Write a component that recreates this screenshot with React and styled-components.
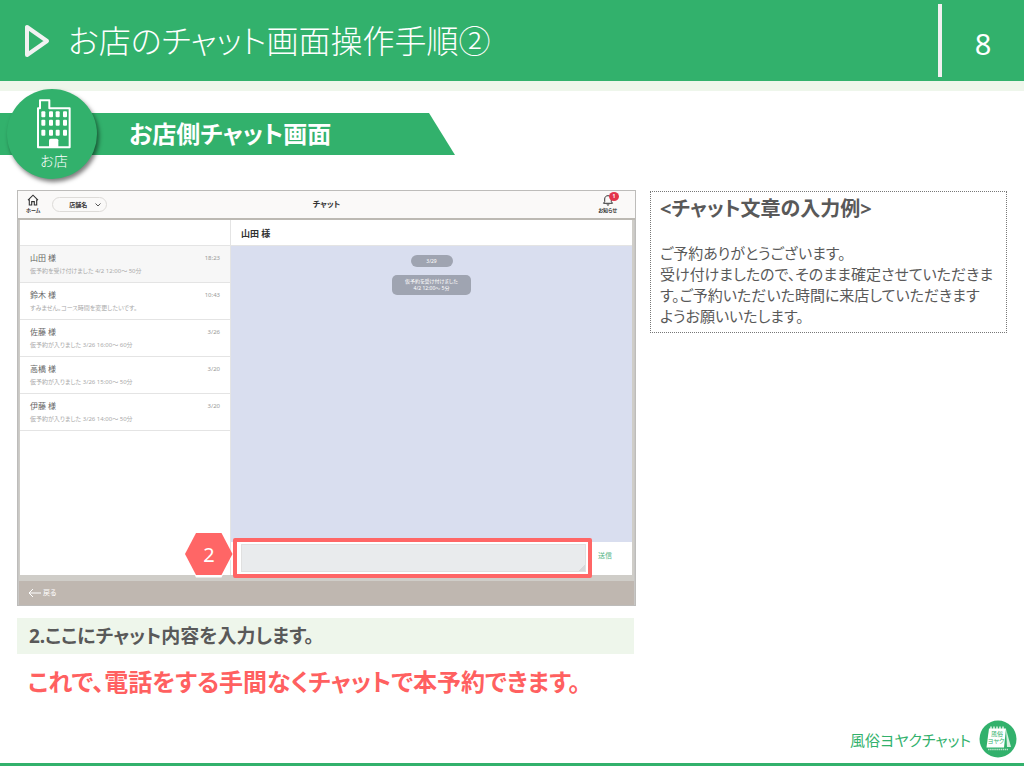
import { useState } from "react";
import styled, { createGlobalStyle } from "styled-components";

const rooms = [
    { id: 1, name: "山田 様", text: "仮予約を受け付けました 4/2 12:00～ 50分", time: "18:23" },
    { id: 2, name: "鈴木 様", text: "すみません。コース時間を変更したいです。", time: "10:43" },
    { id: 3, name: "佐藤 様", text: "仮予約が入りました 3/26 16:00～ 60分", time: "3/26" },
    { id: 4, name: "高橋 様", text: "仮予約が入りました 3/26 15:00～ 50分", time: "3/20" },
    { id: 5, name: "伊藤 様", text: "仮予約が入りました 3/26 14:00～ 50分", time: "3/20" },
];

const windowCols = [124, 147, 167, 189];
const windowRows = [333, 358, 388];

const BuildingIcon = () => (
    <svg width="36" height="50" viewBox="108 296 108 150" fill="none">
        <path d="M114 441V324H120V300H148V324H209V441Z" stroke="#fff" strokeWidth="6" strokeLinejoin="round" />
        {windowRows.map((y) =>
            windowCols.map((x) => <rect key={`${x}-${y}`} x={x} y={y} width="12" height="18" rx="3" fill="#fff" />)
        )}
        <path d="M147 442V420Q147 415 152 415H170Q175 415 175 420V442Z" fill="#fff" />
    </svg>
);

const HomeIcon = () => (
    <svg width="12" height="12" viewBox="0 0 12 12" fill="none" stroke="#333" strokeWidth="1.1">
        <path d="M1 6.2L6 1.2L11 6.2M2.3 5.4V11H4.7V7.6H7.3V11H9.7V5.4" />
    </svg>
);

const BellIcon = () => (
    <svg width="12" height="12" viewBox="0 0 12 12" fill="none" stroke="#333" strokeWidth="1">
        <path d="M1.5 9.3H10.5L9.3 7.6V5C9.3 3 8 1.7 6 1.7S2.7 3 2.7 5V7.6Z" strokeLinejoin="round" />
        <path d="M4.8 10.6Q6 11.8 7.2 10.6" />
    </svg>
);

const LogoIcon = () => (
    <svg width="38" height="38" viewBox="0 0 38 38">
        <circle cx="19" cy="19" r="18.5" fill="#32b16c" />
        <path d="M27 9L32 27H28Z" fill="#d5efdf" />
        <path d="M10 8.5H27L25 27.5H7.5Z" fill="#fff" />
        <path d="M12 6.5V9.5M15 6.5V9.5M18 6.5V9.5M21 6.5V9.5M24 6.5V9.5" stroke="#fff" strokeWidth="1.3" />
        <g fill="#32b16c" fontSize="6" textAnchor="middle">
            <text x="18" y="16">風俗</text>
            <text x="17" y="23">ヨヤク</text>
        </g>
        <path d="M9 29.5H29" stroke="#b5e0c7" strokeWidth="1.3" strokeDasharray="1.5 0.6" />
    </svg>
);

const App = () => {
    const [selected, setSelected] = useState(1);
    const [message, setMessage] = useState("");

    return (
        <>
            <GlobalStyle />
            <Page>
                <Header>
                    <svg width="28" height="36" viewBox="0 0 28 36" fill="none">
                        <path d="M5 4V32L25 18Z" stroke="#f2f2f2" strokeWidth="4" strokeLinejoin="round" />
                    </svg>
                    <PageTitle>お店のチャット画面操作手順②</PageTitle>
                    <PageNumber>8</PageNumber>
                </Header>

                <Banner>
                    <Ribbon>お店側チャット画面</Ribbon>
                    <ShopMark>
                        <BuildingIcon />
                        お店
                    </ShopMark>
                </Banner>

                <Content>
                    <div>
                        <Screen>
                            <ScreenHead>
                                <HeadLeft>
                                    <IconLink href="#home">
                                        <HomeIcon />
                                        ホーム
                                    </IconLink>
                                    <SelectBox>
                                        <ShopSelect aria-label="店舗名">
                                            <option>店舗名</option>
                                        </ShopSelect>
                                        <svg width="6" height="4" viewBox="0 0 6 4" fill="none" stroke="#555">
                                            <path d="M0.5 0.5L3 3L5.5 0.5" />
                                        </svg>
                                    </SelectBox>
                                </HeadLeft>
                                <ScreenTitle>チャット</ScreenTitle>
                                <HeadRight>
                                    <IconLink href="#news">
                                        <BellIcon />
                                        お知らせ
                                        <Badge>1</Badge>
                                    </IconLink>
                                </HeadRight>
                            </ScreenHead>

                            <ScreenBody>
                                <RoomList>
                                    <PanelHead />
                                    {rooms.map((room) => (
                                        <Room key={room.id} $active={room.id === selected} onClick={() => setSelected(room.id)}>
                                            <RoomTop>
                                                {room.name}
                                                <RoomTime>{room.time}</RoomTime>
                                            </RoomTop>
                                            <RoomText>{room.text}</RoomText>
                                        </Room>
                                    ))}
                                </RoomList>
                                <Chat>
                                    <PanelHead>山田 様</PanelHead>
                                    <Messages>
                                        <DateChip>3/29</DateChip>
                                        <Notice>
                                            仮予約を受け付けました
                                            <br />
                                            4/2 12:00～ 5分
                                        </Notice>
                                    </Messages>
                                    <Composer>
                                        <MessageInput
                                            aria-label="メッセージ"
                                            value={message}
                                            onChange={(e) => setMessage(e.target.value)}
                                        />
                                        <SendButton>送信</SendButton>
                                        <Highlight />
                                        <StepMark>
                                            <svg width="50" height="46" viewBox="0 0 50 46">
                                                <path d="M12 2.5H37.5L48.5 24L37.5 45.5H12L1 24Z" fill="#fff" />
                                                <path d="M12 1H37.5L48.5 22L37.5 43H12L1 22Z" fill="#ff6666" />
                                            </svg>
                                            <StepNumber>2</StepNumber>
                                        </StepMark>
                                    </Composer>
                                </Chat>
                            </ScreenBody>

                            <ScreenFoot>
                                <BackButton>
                                    <svg width="13" height="10" viewBox="0 0 13 10" fill="none" stroke="#fff">
                                        <path d="M5 1L1 5L5 9M1 5H13" />
                                    </svg>
                                    戻る
                                </BackButton>
                            </ScreenFoot>
                        </Screen>
                        <Caption>2.ここにチャット内容を入力します。</Caption>
                        <Result>これで、電話をする手間なくチャットで本予約できます。</Result>
                    </div>

                    <Example>
                        <ExampleTitle>&lt;チャット文章の入力例&gt;</ExampleTitle>
                        <ExampleText>
                            ご予約ありがとうございます。
                            <br />
                            受け付けましたので、そのまま確定させていただきま
                            <br />
                            す。ご予約いただいた時間に来店していただきます
                            <br />
                            ようお願いいたします。
                        </ExampleText>
                    </Example>
                </Content>

                <Footer>
                    風俗ヨヤクチャット
                    <LogoIcon />
                </Footer>
            </Page>
        </>
    );
};

const GlobalStyle = createGlobalStyle`
* {
  box-sizing: border-box;
}
body {
  margin: 0;
  background: #fff;
  color: #595959;
  font-family: "Noto Sans", "Noto Sans CJK JP", sans-serif;
  font-feature-settings: "palt";
}
button, select, textarea {
  margin: 0;
  padding: 0;
  border: 0;
  background: none;
  color: inherit;
  font: inherit;
  font-feature-settings: inherit;
}
h1, h2, h3, p {
  margin: 0;
}
svg {
  display: block;
  flex-shrink: 0;
}
`;

const Page = styled.div`
display: flex;
flex-direction: column;
min-height: 100vh;
`;

const Header = styled.header`
display: flex;
align-items: center;
height: 91px;
padding-left: 22px;
border-bottom: 10px solid #eef6eb;
background: #32b16c;
color: #fff;
`;

const PageTitle = styled.h1`
flex: 1;
margin-left: 18px;
font-size: 32px;
font-weight: 300;
line-height: 48px;
white-space: nowrap;
`;

const PageNumber = styled.div`
width: 86px;
height: 73px;
border-left: 4px solid #f2f0f0;
font-size: 29px;
line-height: 80px;
text-align: center;
`;

const Banner = styled.div`
display: grid;
align-items: center;
margin-top: -2px;
`;

const Ribbon = styled.h2`
grid-area: 1 / 1;
width: 455px;
height: 42px;
padding-left: 129px;
background: #32b16c;
clip-path: polygon(0 0, 429px 0, 100% 100%, 0 100%);
color: #fff;
font-size: 24px;
line-height: 42px;
`;

const ShopMark = styled.div`
grid-area: 1 / 1;
display: flex;
flex-direction: column;
align-items: center;
width: 90px;
height: 90px;
margin-left: 7px;
padding: 10px 0 0 4px;
border-radius: 50%;
background: #32b16c;
box-shadow: 2px 3px 4px rgba(0, 0, 0, 0.5);
color: #fff;
font-size: 14px;
font-weight: 300;
line-height: 24px;
z-index: 1;
`;

const Content = styled.main`
display: grid;
grid-template-columns: minmax(0, 619fr) minmax(0, 357fr);
gap: 14px;
align-items: start;
flex: 1;
padding: 11px 17px 0;
`;

const Screen = styled.section`
border: 1px solid #bdbcba;
box-shadow: inset 0 0 0 1px #c8c7c5;
background: #cfcdc8;
`;

const ScreenHead = styled.div`
display: grid;
grid-template-columns: 1fr auto 1fr;
align-items: center;
height: 29px;
padding: 0 8px;
border-bottom: 2px solid #bcb9b3;
background: #faf9f8;
`;

const HeadLeft = styled.div`
display: flex;
align-items: center;
gap: 12px;
`;

const HeadRight = styled.div`
display: flex;
justify-content: flex-end;
padding-right: 10px;
`;

const IconLink = styled.a`
position: relative;
display: flex;
flex-direction: column;
align-items: center;
color: #333;
font-size: 5px;
font-weight: bold;
line-height: 9px;
text-decoration: none;
white-space: nowrap;
`;

const Badge = styled.span`
position: absolute;
top: -2px;
right: -2px;
width: 10px;
height: 9px;
border-radius: 50%;
background: #e3344a;
color: #fff;
text-align: center;
`;

const SelectBox = styled.label`
display: flex;
align-items: center;
width: 55px;
height: 15px;
padding: 0 5px 0 16px;
border: 1px solid #dddbd8;
border-radius: 8px;
`;

const ShopSelect = styled.select`
flex: 1;
appearance: none;
color: #333;
font-size: 6px;
font-weight: bold;
`;

const ScreenTitle = styled.h3`
padding-bottom: 2px;
color: #333;
font-size: 8px;
line-height: 12px;
`;

const ScreenBody = styled.div`
display: grid;
grid-template-columns: minmax(0, 211fr) minmax(0, 401fr);
height: 355px;
margin: 0 3px 6px 2px;
background: #fff;
`;

const RoomList = styled.div`
border-right: 1px solid #e4e4e4;
`;

const PanelHead = styled.div`
height: 26px;
padding-left: 10px;
border-bottom: 1px solid #e4e4e4;
color: #333;
font-size: 9px;
font-weight: bold;
line-height: 27px;
`;

const Room = styled.button`
display: block;
width: 100%;
height: 37px;
padding: 0 10px;
border-bottom: 1px solid #e4e4e4;
background: ${(props) => (props.$active ? "#f7f7f7" : "#fff")};
text-align: left;
white-space: nowrap;
`;

const RoomTop = styled.span`
display: flex;
justify-content: space-between;
color: #666;
font-size: 8px;
line-height: 14px;
`;

const RoomTime = styled.span`
color: #999;
font-size: 6px;
`;

const RoomText = styled.span`
display: block;
color: #aaa;
font-size: 6px;
line-height: 12px;
`;

const Chat = styled.div`
display: flex;
flex-direction: column;
`;

const Messages = styled.div`
display: flex;
flex: 1;
flex-direction: column;
align-items: center;
gap: 8px;
padding-top: 9px;
background: #d9deef;
color: #fff;
font-size: 5px;
text-align: center;
`;

const DateChip = styled.div`
width: 42px;
border-radius: 6px;
background: #9fa4b1;
line-height: 12px;
`;

const Notice = styled.div`
width: 79px;
padding: 3px 0;
border-radius: 5px;
background: #9fa4b1;
line-height: 7px;
`;

const Composer = styled.div`
position: relative;
display: flex;
gap: 12px;
height: 33px;
padding: 2px 20px 3px 10px;
`;

const MessageInput = styled.textarea`
flex: 1;
border: 1px solid #e0e0e0;
background: #e9ebed;
font-size: 8px;

&::-webkit-resizer {
  background: linear-gradient(135deg, transparent 80%, #d6d8da 80%);
}
`;

const SendButton = styled.button`
align-self: flex-start;
margin-top: 5px;
color: #57b586;
font-size: 7px;
line-height: 14px;
`;

const Highlight = styled.div`
position: absolute;
top: -4px;
right: 40px;
bottom: -3px;
left: 2px;
border: 4px solid #ff6666;
border-radius: 2px;
pointer-events: none;
`;

const StepMark = styled.div`
position: absolute;
top: -10px;
left: -47px;
display: grid;
place-items: center;
`;

const StepNumber = styled.span`
position: absolute;
color: #fff;
font-size: 20px;
line-height: 24px;
`;

const ScreenFoot = styled.div`
display: flex;
align-items: center;
height: 24px;
margin: 0 1px;
padding-left: 9px;
background: #bfb7b0;
`;

const BackButton = styled.button`
display: flex;
align-items: center;
gap: 2px;
color: #fff;
font-size: 7px;
line-height: 12px;
`;

const Caption = styled.p`
margin: 12px 2px 0 0;
padding-left: 12px;
background: #eef6eb;
font-size: 19px;
font-weight: bold;
line-height: 36px;
`;

const Result = styled.p`
margin-top: 10px;
padding-left: 11px;
color: #ff6060;
font-size: 24px;
font-weight: bold;
line-height: 36px;
white-space: nowrap;
`;

const Example = styled.section`
margin-top: 1px;
padding: 3px 9px 5px;
border: 1px dotted #777;
white-space: nowrap;
`;

const ExampleTitle = styled.h3`
font-size: 20px;
line-height: 28px;
`;

const ExampleText = styled.p`
margin-top: 20px;
font-size: 15px;
line-height: 21px;
`;

const Footer = styled.footer`
display: flex;
align-items: center;
justify-content: flex-end;
gap: 8px;
margin-bottom: 2px;
padding: 0 7px 5px 0;
border-bottom: 3px solid #32b16c;
color: #32b16c;
font-size: 15px;
`;

export default App;
